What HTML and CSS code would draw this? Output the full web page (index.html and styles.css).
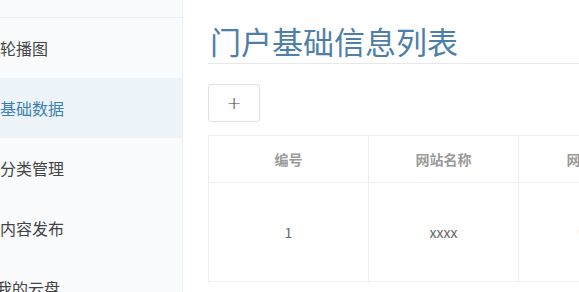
FILE: index.html
```html
<!DOCTYPE HTML>
<html>

<head>
    <meta http-equiv="Content-Type" content="text/html; charset=utf-8" />
    <link rel="stylesheet" href="styles.css">
    <title>门户基础信息列表</title>
</head>

<body>
    <div class="layout">
        <!-- боковое меню -->
        <ul class="side-menu">
            <li class="side-top"></li>
            <li><a href="#">轮播图</a></li>
            <li class="active"><a href="#">基础数据</a></li>
            <li><a href="#">分类管理</a></li>
            <li><a href="#">内容发布</a></li>
            <li><a href="#" class="cut">我的云盘</a></li>
        </ul>

        <div class="content">
            <h1 class="title">门户基础信息列表</h1>

            <button class="btn-add" type="button">+</button>

            <table class="list">
                <colgroup>
                    <col class="col-id">
                    <col class="col-name">
                    <col class="col-url">
                </colgroup>
                <thead>
                    <tr>
                        <th>编号</th>
                        <th>网站名称</th>
                        <th>网站地址</th>
                    </tr>
                </thead>
                <tbody>
                    <tr>
                        <td>1</td>
                        <td>xxxx</td>
                        <td>www</td>
                    </tr>
                </tbody>
            </table>
        </div>
    </div>
</body>
</html>
```

FILE: styles.css
```css
html,
body {
    margin: 0;
    padding: 0;
    height: 100%;
}

body {
    font-family: "Noto Sans CJK SC", "Liberation Sans", sans-serif;
    background: #fff;
    overflow: hidden;
}

.layout {
    display: flex;
    height: 100%;
}

.side-menu {
    width: 182px;
    flex-shrink: 0;
    margin: 0;
    padding: 0;
    list-style: none;
    background: #f9fbfc;
    border-right: 1px solid #eceff2;
    overflow: hidden;
}

.side-menu li {
    height: 60px;
}

.side-menu .side-top {
    height: 17px;
    border-bottom: 1px solid #eceef0;
}

.side-menu li a {
    display: block;
    height: 60px;
    line-height: 60px;
    padding-left: 0;
    font-size: 16px;
    color: #444;
    text-decoration: none;
    white-space: nowrap;
}

.side-menu li a.cut {
    margin-left: -4px;
}

.side-menu li.active {
    background: #ecf3f9;
}

.side-menu li.active a {
    color: #3d7fb2;
}

.content {
    flex: 1;
    padding: 0 0 0 25px;
    overflow: hidden;
    min-width: 0;
}

.title {
    margin: 19px 0 0 0;
    padding: 0 0 0 2px;
    height: 44px;
    line-height: 44px;
    font-size: 31px;
    font-weight: normal;
    color: #4e7fa8;
    border-bottom: 1px solid #e6e8ea;
    white-space: nowrap;
}

.btn-add {
    display: block;
    margin: 20px 0 13px 0;
    width: 52px;
    height: 38px;
    padding: 0;
    background: #fff;
    border: 1px solid #e0e0e0;
    border-radius: 3px;
    font-family: "DejaVu Sans", sans-serif;
    font-size: 18px;
    font-weight: 200;
    line-height: 34px;
    color: #444;
}

.list {
    border-collapse: collapse;
    table-layout: fixed;
    width: 462px;
    border: 1px solid #eceded;
}

.list .col-id {
    width: 160px;
}

.list .col-name {
    width: 150px;
}

.list .col-url {
    width: 152px;
}

.list th,
.list td {
    border: 1px solid #efefef;
    text-align: center;
    font-size: 14px;
    padding: 0;
}

.list th {
    height: 46px;
    font-weight: bold;
    color: #9a9a9a;
}

.list td {
    height: 98px;
    color: #666;
}

.list td:nth-child(3) {
    color: #e4e4e4;
}
```
